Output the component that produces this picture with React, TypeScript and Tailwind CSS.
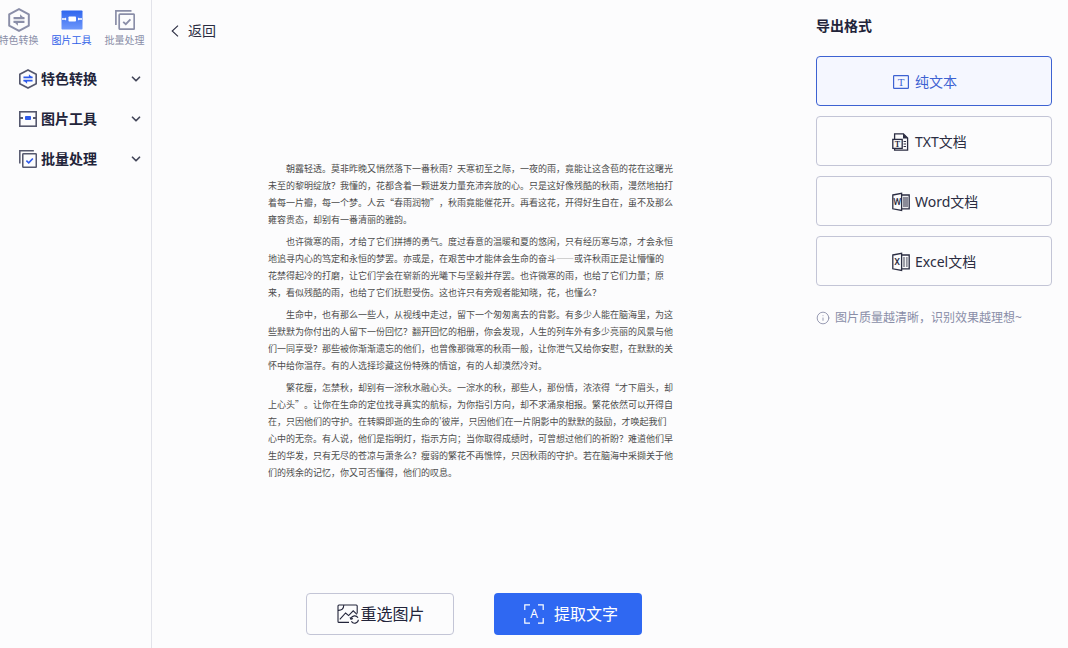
import { useState } from "react";
import type { ReactNode } from "react";
import { ChevronDown, Info } from "lucide-react";

type IconProps = { className?: string; accent?: string };

const HexSwapIcon = ({ className, accent = "currentColor" }: IconProps) => (
  <svg viewBox="0 0 22 22" className={className} fill="none" aria-hidden="true">
    <path
      d="M11 1 L20 5.8 V16.2 L11 21 L2 16.2 V5.8 Z"
      stroke="currentColor"
      strokeWidth="1.8"
      strokeLinejoin="round"
    />
    <path d="M6 9.2 H16 M6 12.8 H16" stroke={accent} strokeWidth="2" />
    <path d="M12 5.8 L16.2 9.8 H12 Z M10 16.2 L5.8 12.2 H10 Z" fill={accent} />
  </svg>
);

const ImageToolIcon = ({ className, accent = "currentColor" }: IconProps) => (
  <svg viewBox="0 0 18 16" className={className} fill="none" aria-hidden="true">
    <rect x="0.8" y="0.8" width="16.4" height="14.4" stroke="currentColor" strokeWidth="1.6" />
    <path d="M1 7 H4 M14 7 H17" stroke="currentColor" strokeWidth="1.8" />
    <rect x="6" y="5" width="6" height="4" rx="0.8" fill={accent} />
  </svg>
);

const ImageToolSolidIcon = ({ className }: IconProps) => (
  <svg viewBox="0 0 22 20" className={className} aria-hidden="true">
    <defs>
      <linearGradient id="toolFill" x1="0" y1="0" x2="0" y2="1">
        <stop offset="0" stopColor="#2f66ee" />
        <stop offset="1" stopColor="#6f98fb" />
      </linearGradient>
    </defs>
    <rect x="0.5" y="0.5" width="21" height="19" rx="0.8" fill="url(#toolFill)" />
    <rect x="7.5" y="6.5" width="7.5" height="5" rx="0.8" fill="#fff" />
    <path d="M1 9 H4.6 M17.6 9 H21" stroke="#fff" strokeWidth="1.4" />
    <path d="M4.6 7.8 V10.2 M17.6 7.8 V10.2" stroke="#fff" strokeWidth="1" />
  </svg>
);

const BatchIcon = ({ className, accent = "currentColor" }: IconProps) => (
  <svg viewBox="0 0 20 20" className={className} fill="none" aria-hidden="true">
    <path d="M0.9 15 V0.9 H16.5" stroke="currentColor" strokeWidth="1.7" />
    <rect x="4.2" y="4.2" width="15" height="15" rx="0.8" stroke="currentColor" strokeWidth="1.7" />
    <path d="M8.2 11.8 L10.8 14.2 L15.4 9.4" stroke={accent} strokeWidth="1.8" />
  </svg>
);

const BackIcon = () => (
  <svg viewBox="0 0 8 12" className="h-3 w-2" fill="none" aria-hidden="true">
    <path d="M7 0.6 L1.2 6 L7 11.4" stroke="currentColor" strokeWidth="1.1" />
  </svg>
);

const PlainTextIcon = () => (
  <svg viewBox="0 0 18 16" className="h-4 w-[18px]" fill="none" aria-hidden="true">
    <rect x="1.6" y="1.6" width="14.8" height="12.8" rx="0.6" stroke="currentColor" strokeWidth="1.2" />
    <text x="9" y="11.6" textAnchor="middle" fontSize="11" fontFamily="Liberation Serif, serif" fill="currentColor">
      T
    </text>
  </svg>
);

const TxtIcon = () => (
  <svg viewBox="0 0 18 20" className="h-5 w-[18px]" fill="none" aria-hidden="true">
    <path d="M2.6 7 V1.8 H11.4 L15.6 6 V18.2 H2.6 V16.6" stroke="currentColor" strokeWidth="1.3" />
    <path d="M11 1.6 V6.4 H16 Z" fill="currentColor" />
    <rect x="0.8" y="7.4" width="9.4" height="9" stroke="currentColor" strokeWidth="1.3" />
    <path d="M11.6 9.5 H14 M11.6 12 H14 M11.6 14.5 H14" stroke="currentColor" />
    <text x="5.5" y="14.6" textAnchor="middle" fontSize="8" fontFamily="Liberation Serif, serif" fontWeight="700" fill="currentColor">
      T
    </text>
  </svg>
);

const OfficeIcon = ({ letter, children }: { letter: string; children: ReactNode }) => (
  <svg viewBox="0 0 18 20" className="h-5 w-[18px]" fill="none" aria-hidden="true">
    <path d="M0.8 3 L9.6 1.4 V18.4 L0.8 16.8 Z" stroke="currentColor" strokeWidth="1.3" />
    <path d="M9.6 3 H17.2 V16.8 H9.6" stroke="currentColor" strokeWidth="1.3" />
    {children}
    <text x="5.1" y="13" textAnchor="middle" fontSize="9" fontFamily="Roboto, sans-serif" fontWeight="500" fill="currentColor">
      {letter}
    </text>
  </svg>
);

const WordIcon = () => (
  <OfficeIcon letter="W">
    <rect x="11" y="4.8" width="5" height="10.4" fill="currentColor" fillOpacity="0.35" />
    <path d="M11 6 H16 M11 8 H16 M11 10 H16 M11 12 H16 M11 14 H16" stroke="currentColor" strokeOpacity="0.6" />
  </OfficeIcon>
);

const ExcelIcon = () => (
  <OfficeIcon letter="X">
    <path d="M12 5 V15 M14.8 5 V15" stroke="currentColor" strokeWidth="1.8" strokeOpacity="0.5" />
  </OfficeIcon>
);

const ReselectIcon = () => (
  <svg viewBox="0 0 22 20" className="h-5 w-[22px]" fill="none" stroke="currentColor" strokeWidth="1.1" aria-hidden="true">
    <path d="M12 18.4 H2 Q1 18.4 1 17.4 V2 Q1 1 2 1 H19.2 Q20.2 1 20.2 2 V9.5" />
    <path d="M1 6.4 Q6.6 6.6 6.8 1" />
    <path d="M2.8 15.4 L8.6 9 L11.6 11.6 L16.2 6.8 L20 10.4" />
    <path d="M14 14.8 A3.8 3.8 0 0 1 21 13.8 M21.4 15.8 A3.8 3.8 0 0 1 14.4 17.4" />
    <path d="M13 13.2 L14 15.2 L16 14.4" />
  </svg>
);

const ScanTextIcon = () => (
  <svg viewBox="0 0 20 20" className="size-5" fill="none" aria-hidden="true">
    <path
      d="M0.8 6 V0.8 H6 M14 0.8 H19.2 V6 M19.2 14 V19.2 H14 M6 19.2 H0.8 V14"
      stroke="currentColor"
      strokeWidth="1.2"
    />
    <text x="10" y="14" textAnchor="middle" fontSize="12" fontFamily="Noto Sans, sans-serif" fill="currentColor">
      A
    </text>
  </svg>
);

const tabs = [
  { label: "特色转换", icon: <HexSwapIcon className="h-6 w-6" /> },
  { label: "图片工具", icon: <ImageToolSolidIcon className="h-5 w-[22px]" /> },
  { label: "批量处理", icon: <BatchIcon className="size-5" /> },
];

const menu = [
  { label: "特色转换", icon: <HexSwapIcon className="size-5" accent="#2f5bea" /> },
  { label: "图片工具", icon: <ImageToolIcon className="ml-px h-4 w-[18px]" accent="#2f5bea" /> },
  { label: "批量处理", icon: <BatchIcon className="ml-px size-[18px]" accent="#2f5bea" /> },
];

const formats = [
  { label: "纯文本", icon: <PlainTextIcon /> },
  { label: "TXT文档", icon: <TxtIcon /> },
  { label: "Word文档", icon: <WordIcon /> },
  { label: "Excel文档", icon: <ExcelIcon /> },
];

const paragraphs = [
  [
    "朝露轻透。莫非昨晚又悄然落下一番秋雨？天寒初至之际，一夜的雨，竟能让这含苞的花在这曙光",
    "未至的黎明绽放？我懂的，花都含着一颗迸发力量充沛奔放的心。只是这好像残酷的秋雨，漫然地拍打",
    "着每一片瓣，每一个梦。人云“春雨润物”，秋雨竟能催花开。再看这花，开得好生自在，虽不及那么",
    "雍容贵态，却别有一番清丽的雅韵。",
  ],
  [
    "也许微寒的雨，才给了它们拼搏的勇气。度过春意的温暖和夏的悠闲，只有经历寒与凉，才会永恒",
    "地追寻内心的笃定和永恒的梦罢。亦或是，在艰苦中才能体会生命的奋斗——或许秋雨正是让懵懂的",
    "花禁得起冷的打磨，让它们学会在崭新的光曦下与坚毅并存罢。也许微寒的雨，也给了它们力量；原",
    "来，看似残酷的雨，也给了它们抚慰受伤。这也许只有旁观者能知晓，花，也懂么？",
  ],
  [
    "生命中，也有那么一些人，从视线中走过，留下一个匆匆离去的背影。有多少人能在脑海里，为这",
    "些默默为你付出的人留下一份回忆？翻开回忆的相册，你会发现，人生的列车外有多少亮丽的风景与他",
    "们一同享受？那些被你渐渐遗忘的他们，也曾像那微寒的秋雨一般，让你泄气又给你安慰，在默默的关",
    "怀中给你温存。有的人选择珍藏这份特殊的情谊，有的人却漠然冷对。",
  ],
  [
    "繁花瘦，怎禁秋，却别有一淙秋水融心头。一淙水的秋，那些人，那份情，浓浓得“才下眉头，却",
    "上心头”。让你在生命的定位找寻真实的航标，为你指引方向，却不求涌泉相报。繁花依然可以开得自",
    "在，只因他们的守护。在转瞬即逝的生命的'彼岸，只因他们在一片阴影中的默默的鼓励，才唤起我们",
    "心中的无奈。有人说，他们是指明灯，指示方向；当你取得成绩时，可曾想过他们的祈盼？难道他们早",
    "生的华发，只有无尽的苍凉与萧条么？瘦弱的繁花不再憔悴，只因秋雨的守护。若在脑海中采撷关于他",
    "们的残余的记忆，你又可否懂得，他们的叹息。",
  ],
];

function Sidebar() {
  return (
    <aside className="w-[152px] shrink-0 overflow-hidden border-r border-[#e2e3ea]">
      <nav className="-ml-2 flex pt-2">
        {tabs.map((tab, i) => (
          <button
            key={tab.label}
            className={`flex w-[53px] shrink-0 flex-col items-center text-[10px] leading-4 whitespace-nowrap ${
              i === 1 ? "text-[#2f5fe8]" : "text-[#8a8ea8]"
            }`}
          >
            <span className="flex h-6 items-center">{tab.icon}</span>
            {tab.label}
          </button>
        ))}
      </nav>
      <ul className="mt-[11px]">
        {menu.map((item) => (
          <li key={item.label}>
            <button className="flex h-10 w-full items-center pr-2 pl-[18px] text-sm font-bold text-[#22243a]">
              <span className="flex w-[23px] items-center text-[#55586e]">{item.icon}</span>
              {item.label}
              <ChevronDown className="ml-auto size-[14px] text-[#44475a]" strokeWidth={3} />
            </button>
          </li>
        ))}
      </ul>
    </aside>
  );
}

function Preview() {
  return (
    <main className="flex min-w-0 flex-1 flex-col">
      <header className="flex h-12 items-end px-[19px] pb-[5px]">
        <button className="flex items-center gap-[9px] text-sm leading-6 text-[#2b2d42]">
          <BackIcon />
          返回
        </button>
      </header>

      <div className="flex flex-1 items-center justify-center">
        <article className="w-[412px] space-y-[5px] font-['Noto_Sans_CJK_SC',sans-serif] text-[9px] leading-[17px] text-[#4c4c4c] [text-spacing-trim:space-all]">
          {paragraphs.map((lines) => (
            <p key={lines[0]}>
              {lines.map((line, i) => (
                <span key={line} className={`block whitespace-nowrap ${i === 0 ? "pl-[18px]" : ""}`}>
                  {line}
                </span>
              ))}
            </p>
          ))}
        </article>
      </div>

      <footer className="flex justify-center gap-10 pb-[13px] text-base">
        <button className="flex h-[42px] w-[148px] items-center justify-center gap-px rounded-[4px] border border-[#c3c5d6] pl-0.5 text-[#22243a]">
          <ReselectIcon />
          重选图片
        </button>
        <button className="flex h-[42px] w-[148px] items-center justify-center gap-[10px] rounded-[4px] bg-[#2f68f2] pl-1.5 text-white">
          <ScanTextIcon />
          提取文字
        </button>
      </footer>
    </main>
  );
}

function ExportPanel() {
  const [active, setActive] = useState("纯文本");

  return (
    <section className="w-[272px] shrink-0 pt-4 pr-4 pl-5">
      <h2 className="text-sm leading-5 font-bold text-[#22243a]">导出格式</h2>
      <div className="mt-5 flex flex-col gap-[10px]">
        {formats.map((format) => (
          <button
            key={format.label}
            aria-pressed={active === format.label}
            onClick={() => setActive(format.label)}
            className={`flex h-[50px] items-center rounded-[4px] border pt-px pl-[75px] text-sm ${
              active === format.label
                ? "border-[#3d62d2] bg-[#f5f7ff] text-[#3d62d2]"
                : "border-[#c3c5d6] text-[#2b2d42]"
            }`}
          >
            <span className="mr-[5px] flex">{format.icon}</span>
            {format.label}
          </button>
        ))}
      </div>
      <p className="mt-[22px] flex items-center gap-[5px] text-xs leading-5 whitespace-nowrap text-[#8a8ea8]">
        <Info className="size-[14px]" strokeWidth={1.5} />
        图片质量越清晰，识别效果越理想~
      </p>
    </section>
  );
}

export default function App() {
  return (
    <div
      lang="zh-CN"
      className="flex min-h-screen bg-[#fcfcfd] font-['Noto_Sans','Noto_Sans_CJK_SC',sans-serif]"
    >
      <Sidebar />
      <Preview />
      <ExportPanel />
    </div>
  );
}
